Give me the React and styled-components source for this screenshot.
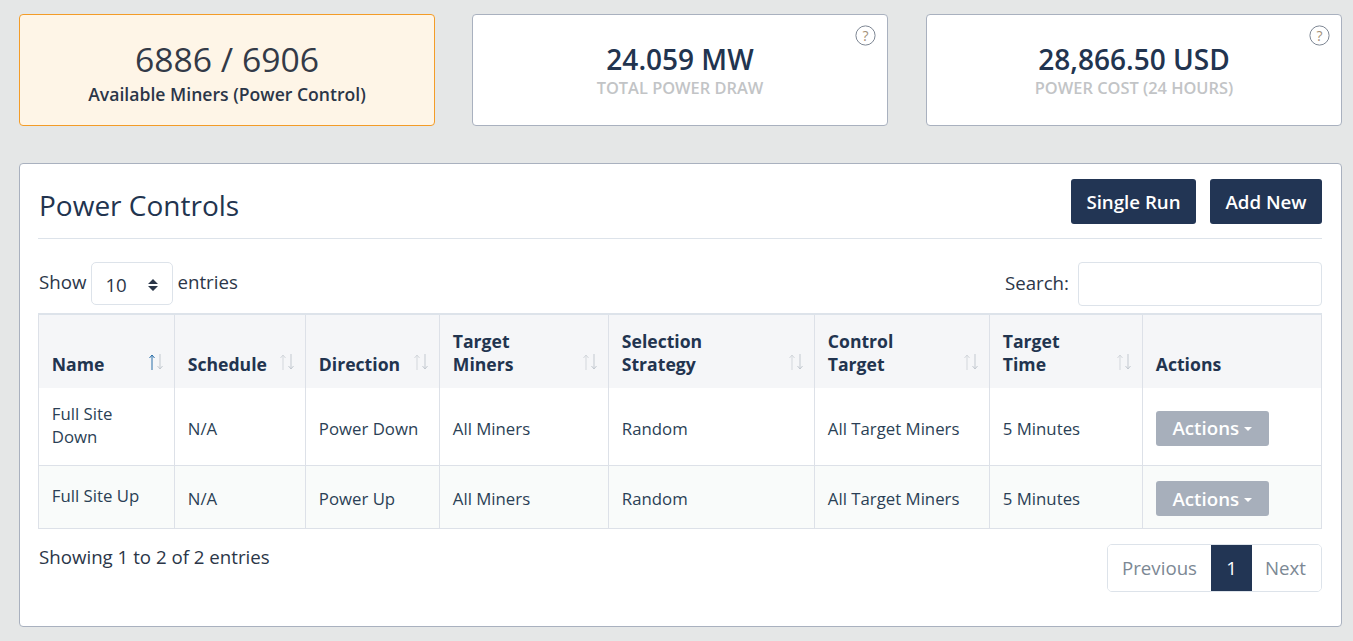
import React from "react"
import styled, { createGlobalStyle } from "styled-components"

const GlobalStyle = createGlobalStyle`
  html, body {
    margin: 0;
    padding: 0;
    background: #e5e7e7;
    color: #22344f;
    font-family: "Open Sans", "Liberation Sans", sans-serif;
  }
  * {
    box-sizing: border-box;
  }
`

const Page = styled.div`
  padding: 14px 11px 14px 19px;
  height: 641px;
  overflow: hidden;
`

const StatGrid = styled.div`
  display: grid;
  grid-template-columns: 416px 417px 416px;
  column-gap: 37px;
  margin-bottom: 37px;
`

const StatCard = styled.div`
  position: relative;
  width: 416px;
  height: 112px;
  border-radius: 4px;
  border: 1px solid ${(p) => (p.$warn ? "#f39c28" : "#a9b1bf")};
  background: ${(p) => (p.$warn ? "#fef5e7" : "#fff")};
  display: flex;
  flex-direction: column;
  align-items: center;
  padding-top: ${(p) => (p.$warn ? "21px" : "25px")};
`

const BigValue = styled.div`
  font-size: 33.7px;
  line-height: 46px;
  color: #333a47;
`

const StatLabel = styled.div`
  font-size: 17.6px;
  font-weight: 600;
  line-height: 24px;
  color: #2b3648;
`

const Value = styled.div`
  font-size: 28px;
  font-weight: 600;
  line-height: 38px;
  color: #22344f;
`

const SubLabel = styled.div`
  font-size: 16.4px;
  font-weight: 600;
  line-height: 22px;
  margin-top: -1px;
  color: #c2c4c6;
`

const HelpIcon = styled.svg`
  position: absolute;
  top: 10px;
  right: 11px;
  width: 21px;
  height: 21px;
`

const Panel = styled.section`
  height: 464px;
  background: #fff;
  border: 1px solid #a9b1bf;
  border-radius: 4px;
  padding: 15px 19px 0 18px;
`

const PanelHeader = styled.header`
  display: flex;
  align-items: center;
  justify-content: space-between;
  height: 60px;
  padding-bottom: 15px;
  border-bottom: 1px solid #dde3ea;
`

const Title = styled.h2`
  margin: 0 0 0 1px;
  font-size: 28px;
  font-weight: 400;
  color: #22344f;
  position: relative;
  top: 4px;
`

const ButtonRow = styled.div`
  display: flex;
  gap: 14px;
`

const DarkButton = styled.button`
  height: 45px;
  width: ${(p) => p.$w}px;
  padding: 0;
  border: none;
  border-radius: 3px;
  background: #223554;
  color: #fff;
  font-family: inherit;
  font-size: 18.7px;
  font-weight: 600;
`

const Controls = styled.div`
  display: flex;
  align-items: flex-start;
  justify-content: space-between;
  height: 44px;
  margin-top: 23px;
  margin-bottom: 7px;
  padding-left: 1px;
  font-size: 18.7px;
  color: #2b3648;
`

const Inline = styled.label`
  display: flex;
  align-items: flex-start;
  gap: 5px;
  line-height: ${(p) => p.$lh}px;
`

const SelectBox = styled.div`
  width: 82px;
  height: 43px;
  margin-right: -1px;
  border: 1px solid #dde3ea;
  border-radius: 5px;
  display: flex;
  align-items: center;
  justify-content: space-between;
  padding: 2px 13px 0 13px;
  font-size: 18.7px;
`

const SearchInput = styled.input`
  width: 244px;
  height: 44px;
  margin-left: 4px;
  border: 1px solid #dde3ea;
  border-radius: 4px;
  outline: none;
`

const Table = styled.table`
  width: 1283px;
  table-layout: fixed;
  border-collapse: collapse;
  border: 1px solid #dde1e8;
  border-top: 2px solid #dde3ea;
`

const Th = styled.th`
  width: ${(p) => p.$w}px;
  height: 74px;
  position: relative;
  background: #f5f6f8;
  border-left: 1px solid #dde1e8;
  border-right: 1px solid #dde1e8;
  padding: 0 13px 12px 12.8px;
  vertical-align: bottom;
  text-align: left;
  font-size: 17.6px;
  font-weight: 700;
  line-height: 23px;
  color: #22344f;
`

const SortIcon = styled.svg`
  position: absolute;
  right: 8px;
  bottom: 16px;
  width: 20px;
  height: 20px;
`

const Tr = styled.tr`
  height: ${(p) => p.$h}px;
  background: ${(p) => (p.$alt ? "#f9fbfa" : "#fff")};
  border-bottom: 1px solid #dde1e8;
`

const Td = styled.td`
  border-left: 1px solid #dde1e8;
  border-right: 1px solid #dde1e8;
  padding: ${(p) => p.$top ?? 4}px ${(p) => p.$right ?? 13}px ${(p) => p.$bottom ?? 0}px 12.8px;
  font-size: 16.8px;
  line-height: 23px;
  color: #2b3f55;
`

const ActionButton = styled.button`
  width: 113px;
  height: 35px;
  padding: 0 0 1px;
  border: none;
  border-radius: 3px;
  background: #a7afbb;
  color: #fff;
  font-family: inherit;
  font-size: 18.7px;
  font-weight: 600;
  display: flex;
  align-items: center;
  justify-content: center;
  gap: 5px;
`

const Caret = styled.span`
  width: 0;
  height: 0;
  margin-top: 3px;
  border-left: 4px solid transparent;
  border-right: 4px solid transparent;
  border-top: 4px solid #fff;
`

const Footer = styled.div`
  display: flex;
  justify-content: space-between;
  align-items: flex-start;
  margin-top: 15px;
  font-size: 18.7px;
  color: #2b3648;
`

const Info = styled.div`
  padding-left: 1px;
  line-height: 26px;
`

const Pagination = styled.nav`
  display: flex;
  height: 48px;
  border: 1px solid #dde3ea;
  border-radius: 5px;
  overflow: hidden;
`

const PageItem = styled.span`
  display: flex;
  align-items: center;
  justify-content: center;
  width: ${(p) => p.$w}px;
  margin: ${(p) => (p.$active ? "-1px 0" : "0")};
  padding-right: ${(p) => p.$pr ?? 0}px;
  background: ${(p) => (p.$active ? "#223554" : "#fff")};
  color: ${(p) => (p.$active ? "#fff" : "#7c8894")};
  font-size: 18.7px;
`

const columns = [
  { label: ["Name"], w: 136, active: true },
  { label: ["Schedule"], w: 131 },
  { label: ["Direction"], w: 134 },
  { label: ["Target", "Miners"], w: 169 },
  { label: ["Selection", "Strategy"], w: 206 },
  { label: ["Control", "Target"], w: 175 },
  { label: ["Target", "Time"], w: 153 },
  { label: ["Actions"], w: 179, plain: true },
]

const rows = [
  { name: "Full Site Down", direction: "Power Down", h: 77 },
  { name: "Full Site Up", direction: "Power Up", h: 63, alt: true },
]

function Help() {
  return (
    <HelpIcon viewBox="0 0 21 21">
      <circle cx="10.5" cy="10.5" r="9.6" fill="none" stroke="#7e8794" strokeWidth="1" />
      <text x="10.5" y="15.5" textAnchor="middle" fontSize="14" fontFamily="Open Sans" fill="#a38f78">
        ?
      </text>
    </HelpIcon>
  )
}

function Sort({ active }) {
  return (
    <SortIcon viewBox="0 0 20 20" fill="none" strokeWidth="1">
      <path d="M6 18V3M3.5 6L6 3l2.5 3" stroke={active ? "#2a6ea8" : "#d3d7dc"} />
      <path d="M14 2v15M11.5 14l2.5 3 2.5-3" stroke="#c3c9d0" />
    </SortIcon>
  )
}

export default function App() {
  return (
    <Page>
      <GlobalStyle />
      <StatGrid>
        <StatCard $warn>
          <BigValue>6886 / 6906</BigValue>
          <StatLabel>Available Miners (Power Control)</StatLabel>
        </StatCard>
        <StatCard>
          <Help />
          <Value>24.059 MW</Value>
          <SubLabel>TOTAL POWER DRAW</SubLabel>
        </StatCard>
        <StatCard>
          <Help />
          <Value>28,866.50 USD</Value>
          <SubLabel>POWER COST (24 HOURS)</SubLabel>
        </StatCard>
      </StatGrid>
      <Panel>
        <PanelHeader>
          <Title>Power Controls</Title>
          <ButtonRow>
            <DarkButton $w={125}>Single Run</DarkButton>
            <DarkButton $w={112}>Add New</DarkButton>
          </ButtonRow>
        </PanelHeader>
        <Controls>
          <Inline $lh={40}>
            Show
            <SelectBox>
              10
              <svg width="12" height="14" viewBox="0 0 12 14">
                <path d="M6 1l5 5H1zM6 13L1 8h10z" fill="#2b3648" />
              </svg>
            </SelectBox>
            entries
          </Inline>
          <Inline $lh={42}>
            Search:
            <SearchInput />
          </Inline>
        </Controls>
        <Table>
          <thead>
            <tr>
              {columns.map((c) => (
                <Th key={c.label.join()} $w={c.w}>
                  {c.label.map((l) => (
                    <div key={l}>{l}</div>
                  ))}
                  {!c.plain && <Sort active={c.active} />}
                </Th>
              ))}
            </tr>
          </thead>
          <tbody>
            {rows.map((r) => (
              <Tr key={r.name} $h={r.h} $alt={r.alt}>
                <Td $top={0} $bottom={2} $right={24}>
                  {r.name}
                </Td>
                <Td>N/A</Td>
                <Td>{r.direction}</Td>
                <Td>All Miners</Td>
                <Td>Random</Td>
                <Td>All Target Miners</Td>
                <Td>5 Minutes</Td>
                <Td $top={4}>
                  <ActionButton>
                    Actions <Caret />
                  </ActionButton>
                </Td>
              </Tr>
            ))}
          </tbody>
        </Table>
        <Footer>
          <Info>Showing 1 to 2 of 2 entries</Info>
          <Pagination>
            <PageItem $w={103}>Previous</PageItem>
            <PageItem $w={41} $active>
              1
            </PageItem>
            <PageItem $w={69} $pr={2}>
              Next
            </PageItem>
          </Pagination>
        </Footer>
      </Panel>
    </Page>
  )
}
